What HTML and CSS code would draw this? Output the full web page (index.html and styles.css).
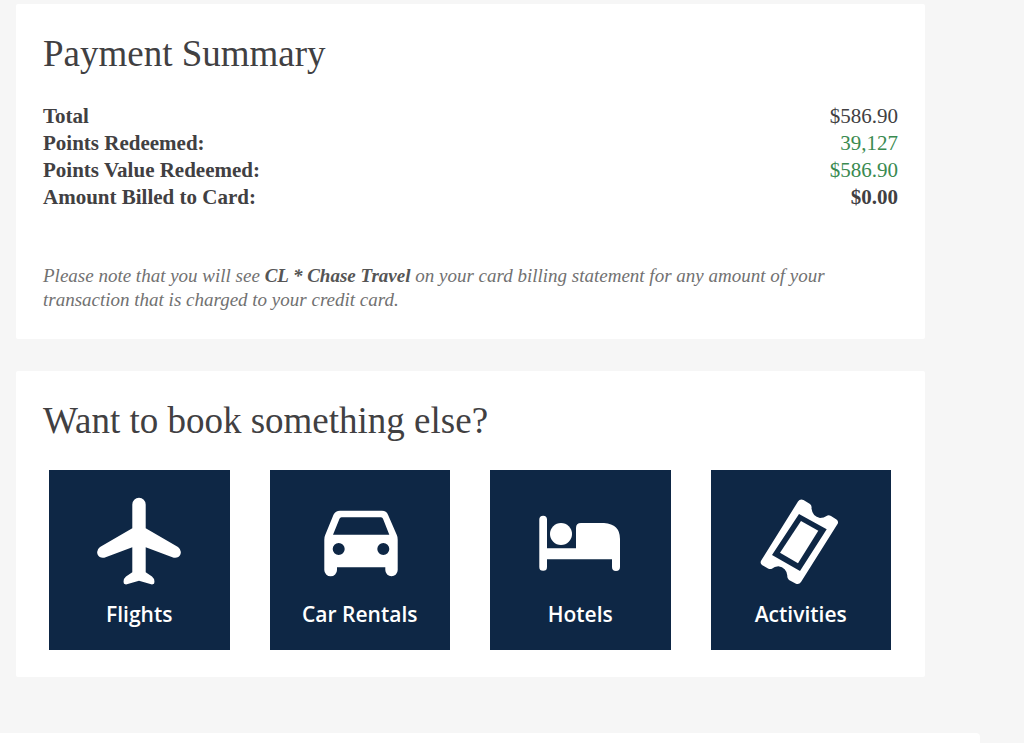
FILE: index.html
```
<!DOCTYPE html>
<html lang="en">

    <head>
        <meta charset="UTF-8">
        <meta name="viewport" content="width=device-width, initial-scale=1.0">
        <title>Payment Summary</title>
        <link rel="stylesheet" href="styles.css">
    </head>

    <body>

        <main class="holder">
            <section class="card">
                <h1 class="title">Payment Summary</h1>
                <table class="summary">
                    <tr>
                        <th scope="row">Total</th>
                        <td>$586.90</td>
                    </tr>
                    <tr>
                        <th scope="row">Points Redeemed:</th>
                        <td class="points">39,127</td>
                    </tr>
                    <tr>
                        <th scope="row">Points Value Redeemed:</th>
                        <td class="points">$586.90</td>
                    </tr>
                    <tr>
                        <th scope="row">Amount Billed to Card:</th>
                        <td class="billed">$0.00</td>
                    </tr>
                </table>
                <p class="note">Please note that you will see <strong>CL * Chase Travel</strong> on your card billing statement for any amount of your transaction that is charged to your credit card.</p>
            </section>

            <section class="card">
                <h2 class="title">Want to book something else?</h2>
                <nav class="tiles">
                    <a class="tile" href="#flights">
                        <svg class="icon" viewBox="0 0 100 100" aria-hidden="true">
                            <path d="M50 7.7a6.7 6.7 0 0 1 6.7 6.7v23.9L89 57q4 3 2.400 7.500-2 4-6.700 3.200L56.700 57.300v25L63 86.500q3.500 3 2 7.300l-2 .7L50 90.700l-13 3.800-2-.7q-1.500-4.300 2-7.300l6.300-4.200v-25L15.300 67.700q-4.700.8-6.700-3.200Q7 60 11 57l32.300-18.700V14.400A6.700 6.700 0 0 1 50 7.700z" />
                        </svg>
                        <span>Flights</span>
                    </a>
                    <a class="tile" href="#cars">
                        <svg class="icon" viewBox="0 0 100 100" aria-hidden="true">
                            <path fill-rule="evenodd" d="M30 20.700H72q4.500 0 6 4l8.700 20q1 2 1 5V80a6.200 6.200 0 0 1-12.400 0v-2.700H27V80a6.300 6.300 0 0 1-12.700 0V49.700q0-3 1-5l8.200-20q2-4 6.500-4zM31.500 27.300q-1.500 0-2 1.500L23 44.700H79.300L73 28.800q-.5-1.500-2-1.500zM28.700 53a6 6 0 1 0 0 12 6 6 0 0 0 0-12zM73.300 53a6 6 0 1 0 0 12 6 6 0 0 0 0-12z" />
                        </svg>
                        <span>Car Rentals</span>
                    </a>
                    <a class="tile" href="#hotels">
                        <svg class="icon" viewBox="0 0 100 100" aria-hidden="true">
                            <path d="M9.300 29.500a3.850 3.850 0 0 1 7.700 0v28.800h29V38q0-5 5-5H74q16 1 16 16v28a4 4 0 0 1-8 0v-7.700H17V77a3.850 3.850 0 0 1-7.700 0z" />
                            <circle cx="31" cy="44" r="11" />
                        </svg>
                        <span>Hotels</span>
                    </a>
                    <a class="tile" href="#activities">
                        <svg class="icon" viewBox="0 0 100 100" aria-hidden="true">
                            <path fill-rule="evenodd" d="M47 11.500q2-3 5.500-1.500l6.500 4q2 1.500 1.500 4.500 1 8 8.500 9.500 4 0 6.500-2 2-1.500 4.500 0l5.500 3.500q2.500 2 1 4.500L50 92q-2 3-5.500 1.500L38 90q-2-1.500-1.700-4.500-.8-8-9-9.300-4 .3-6 2.300-2 1.200-4.300 0l-6-3.500q-2.300-2-.8-4.500zM48 24 21 65 49 81 75.700 39.300z" />
                            <path d="M50 31 67.300 40.700 47 73.300 29 62.700z" />
                        </svg>
                        <span>Activities</span>
                    </a>
                </nav>
            </section>
        </main>

        <footer class="foot"></footer>

    </body>

</html>
```
FILE: styles.css
```
:root {
    --bg: #f6f6f6;
    --navy: #0e2745;
    --text: #414042;
    --dull: #717171;
    --green: #3a8a50;
}

* {
    box-sizing: border-box;
}

body {
    margin: 0;
    min-height: 100vh;
    display: flex;
    flex-direction: column;
    background-color: var(--bg);
    color: var(--text);
    font-family: 'Liberation Serif', 'Times New Roman', serif;
}

.holder {
    display: flex;
    flex-direction: column;
    gap: 32px;
    padding: 4px 99px 56px 16px;
}

.card {
    padding: 28px 27px 27px;
    background: white;
    border-radius: 2px;
}

.title {
    margin: 0;
    font-size: 37px;
    font-weight: normal;
    line-height: 44px;
}

.summary {
    width: 100%;
    margin-top: 27px;
    border-collapse: collapse;
    font-size: 21px;
    line-height: 27px;
}

.summary th,
.summary td {
    padding: 0;
}

.summary th {
    text-align: left;
}

.summary td {
    text-align: right;
}

.summary .points {
    color: var(--green);
}

.summary .billed {
    font-weight: bold;
}

.note {
    margin: 53px 0 0;
    padding-right: 72px;
    color: var(--dull);
    font-size: 19px;
    font-style: italic;
    line-height: 24px;
}

.note strong {
    color: #555555;
}

.tiles {
    display: grid;
    grid-template-columns: repeat(4, 1fr);
    gap: 40px;
    margin-top: 27px;
    padding: 0 7px 0 6px;
}

.tile {
    display: flex;
    flex-direction: column;
    align-items: center;
    padding: 20px 0;
    background: var(--navy);
    color: white;
    font-family: 'Open Sans', sans-serif;
    font-size: 21px;
    font-weight: 600;
    line-height: 28px;
    text-decoration: none;
}

.icon {
    width: 100px;
    height: 100px;
    margin-bottom: 12px;
    fill: currentColor;
}

.tile span {
    margin-top: -2px;
    padding-bottom: 2px;
}

.foot {
    flex: 1;
    margin-right: 44px;
    background: white;
    border-top-right-radius: 4px;
}
```
